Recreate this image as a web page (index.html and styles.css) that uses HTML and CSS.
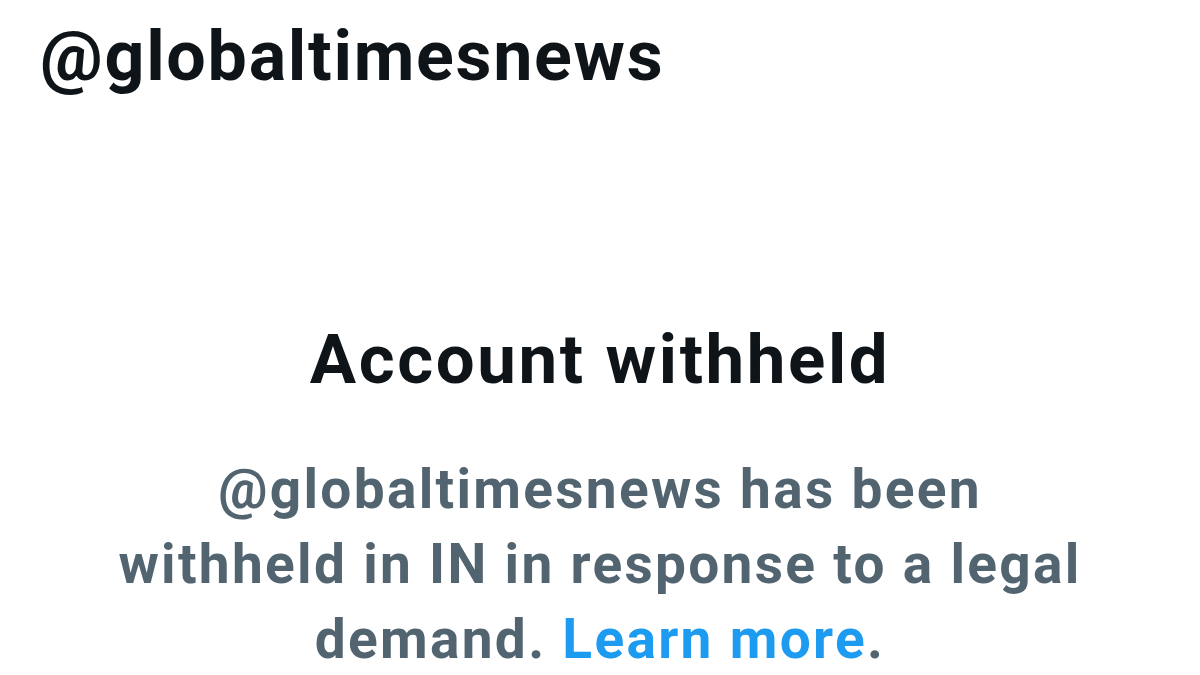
FILE: index.html
```html
<!DOCTYPE html>
<html lang="en">
<head>
    <meta charset="UTF-8">
    <title>@globaltimesnews</title>
    <link rel="stylesheet" href="styles.css">
</head>
<body>
    <header class="profile-header">
        <div class="handle">@globaltimesnews</div>
    </header>

    <main class="withheld">
        <h1 class="withheld-title">Account withheld</h1>
        <p class="withheld-text">
            @globaltimesnews has been<br>
            withheld in IN in response to a legal<br>
            demand. <a href="#" class="learn-more">Learn more</a>.
        </p>
    </main>
</body>
</html>
```

FILE: styles.css
```css
* {
    margin: 0;
    padding: 0;
    box-sizing: border-box;
}

body {
    background: #fff;
    color: #0f1419;
    font-family: Roboto, "Open Sans", sans-serif;
    width: 1200px;
    height: 675px;
    overflow: hidden;
}

.profile-header {
    padding: 16px 0 0 40px;
}

.handle {
    font-size: 70px;
    font-weight: 700;
    letter-spacing: 1.7px;
    line-height: 80px;
}

.withheld {
    display: flex;
    flex-direction: column;
    align-items: center;
    text-align: center;
    padding-top: 224px;
}

.withheld-title {
    font-size: 69px;
    font-weight: 700;
    letter-spacing: 2.6px;
    line-height: 80px;
    margin-bottom: 52px;
}

.withheld-text {
    color: #536471;
    font-size: 55px;
    font-weight: 700;
    letter-spacing: 2.3px;
    line-height: 75px;
}

.learn-more {
    color: #1d9bf0;
    text-decoration: none;
}
```
